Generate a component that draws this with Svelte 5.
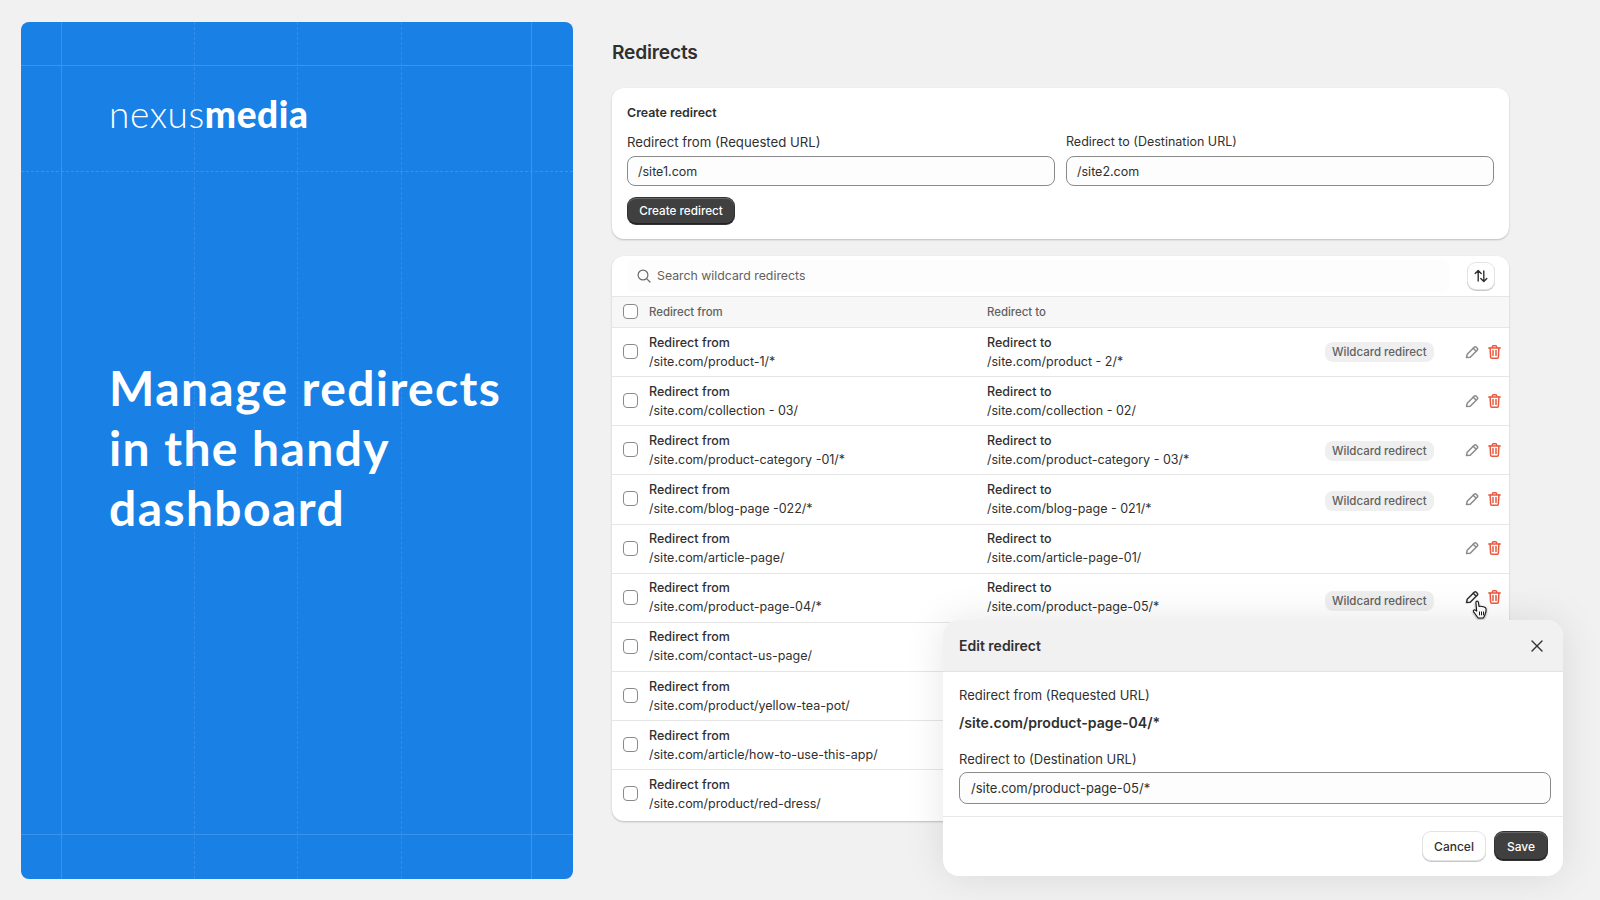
<script>
  const vLines = [
    { x: 40, dashed: false },
    { x: 173, dashed: true },
    { x: 276, dashed: true },
    { x: 380, dashed: true },
    { x: 510, dashed: false }
  ];

  // nudge: the badges in the design are not all centred the same in their row
  const rows = [
    { from: '/site.com/product-1/*', to: '/site.com/product - 2/*', wildcard: true, nudge: 0 },
    { from: '/site.com/collection - 03/', to: '/site.com/collection - 02/', wildcard: false },
    { from: '/site.com/product-category -01/*', to: '/site.com/product-category - 03/*', wildcard: true, nudge: 1 },
    { from: '/site.com/blog-page -022/*', to: '/site.com/blog-page - 021/*', wildcard: true, nudge: 2 },
    { from: '/site.com/article-page/', to: '/site.com/article-page-01/', wildcard: false },
    { from: '/site.com/product-page-04/*', to: '/site.com/product-page-05/*', wildcard: true, active: true, nudge: 3 },
    { from: '/site.com/contact-us-page/' },
    { from: '/site.com/product/yellow-tea-pot/' },
    { from: '/site.com/article/how-to-use-this-app/' },
    { from: '/site.com/product/red-dress/' }
  ];
</script>

<div class="page">
  <aside class="hero">
    <span class="h-line top"></span>
    <span class="h-line dotted"></span>
    <span class="h-line bottom"></span>
    {#each vLines as line}
      <span class="v-line" class:dashed={line.dashed} style="left: {line.x}px"></span>
    {/each}

    <div class="logo"><span class="logo-light">nexus</span><span class="logo-bold">media</span></div>
    <h2>Manage redirects<br />in the handy<br />dashboard</h2>
  </aside>

  <main class="content">
    <h1>Redirects</h1>

    <section class="card create">
      <h3>Create redirect</h3>
      <div class="fields">
        <div class="field">
          <span class="label">Redirect from (Requested URL)</span>
          <div class="input">/site1.com</div>
        </div>
        <div class="field">
          <span class="label small">Redirect to (Destination URL)</span>
          <div class="input">/site2.com</div>
        </div>
      </div>
      <button class="btn-dark create-btn">Create redirect</button>
    </section>

    <section class="card table">
      <div class="search-row">
        <div class="search">
          <svg width="14" height="14" viewBox="0 0 14 14" fill="none" stroke="#6b6b6b" stroke-width="1.2" stroke-linecap="round">
            <circle cx="6" cy="6" r="4.9" />
            <path d="M9.6 9.6 13 13" />
          </svg>
          <span>Search wildcard redirects</span>
        </div>
        <button class="sort" aria-label="Sort">
          <svg width="14" height="14" viewBox="0 0 14 14" fill="none" stroke="#303030" stroke-width="1.4" stroke-linecap="round" stroke-linejoin="round">
            <path d="M4.2 12V1.6M1.2 4.6l3-3 3 3" />
            <path d="M9.8 2v10.4M6.8 9.4l3 3 3-3" />
          </svg>
        </button>
      </div>

      <div class="row head">
        <span class="check"></span>
        <span class="col-from">Redirect from</span>
        <span class="col-to">Redirect to</span>
      </div>

      {#each rows as row}
        <div class="row">
          <span class="check"></span>
          <div class="col-from">
            <strong>Redirect from</strong>
            <span>{row.from}</span>
          </div>
          {#if row.to}
            <div class="col-to">
              <strong>Redirect to</strong>
              <span>{row.to}</span>
            </div>
            <div class="col-badge">
              {#if row.wildcard}<span class="badge" style="transform: translateY({row.nudge}px)">Wildcard redirect</span>{/if}
            </div>
            <div class="actions">
              <svg class="pencil" class:active={row.active} width="14" height="14" viewBox="0 0 14 14" fill="none" stroke-width="1.5" stroke-linejoin="round" stroke-linecap="round">
                <path d="M1.5 12.5l.7-3.2 7-7a1.5 1.5 0 0 1 2.1 0l.9.9a1.5 1.5 0 0 1 0 2.1l-7 7-3.7.2z" />
                <path d="M8.2 3.3l2.5 2.5" />
              </svg>
              <svg width="13" height="14" viewBox="0 0 13 14" fill="none" stroke="#e8593f" stroke-width="1.5" stroke-linejoin="round" stroke-linecap="round">
                <path d="M.8 3h11.4M4.4 3V1.6c0-.4.3-.8.8-.8h2.600c.5 0 .8.4.8.8V3" />
                <path d="M2.100 3l.5 9c0 .7.5 1.200 1.200 1.200h5.400c.7 0 1.200-.5 1.200-1.200l.5-9" />
                <path d="M5 5.600v5M8 5.600v5" />
              </svg>
            </div>
          {/if}
        </div>
      {/each}
    </section>
  </main>

  <svg class="cursor" width="16" height="19" viewBox="0 0 16 19">
    <path d="M4.200 1.600c.8-.9 2-.5 2.200.7l.6 4.200c.9-.5 5.300.2 6.400 1.200.8.8.6 4.200-.3 6.600-.5 1.500-1.300 2.900-2 3.700H6.200C5 16.400 3.400 14 1.700 11.800c-.8-1.100.3-2.300 1.500-1.700l1.500 1L4 3.400c-.1-.7-.1-1.300.2-1.800z" fill="#fff" stroke="#1a1a1a" stroke-width="1.100" stroke-linejoin="round" />
    <path d="M7.500 11.500v3.800M9.500 11.500v3.800M11.500 11.500v3.800" stroke="#1a1a1a" stroke-width="1" />
  </svg>

  <div class="modal">
    <header>
      <span class="modal-title">Edit redirect</span>
      <svg width="12" height="12" viewBox="0 0 12 12" fill="none" stroke="#303030" stroke-width="1.400" stroke-linecap="round">
        <path d="M1 1l10 10M11 1 1 11" />
      </svg>
    </header>
    <div class="modal-body">
      <span class="label">Redirect from (Requested URL)</span>
      <strong class="value">/site.com/product-page-04/*</strong>
      <span class="label second">Redirect to (Destination URL)</span>
      <div class="input tall">/site.com/product-page-05/*</div>
    </div>
    <footer>
      <button class="btn-light">Cancel</button>
      <button class="btn-dark save">Save</button>
    </footer>
  </div>
</div>

<style>
  :global(body) {
    margin: 0;
    background: #f1f1f1;
  }

  .page {
    position: relative;
    width: 1600px;
    height: 900px;
    display: flex;
    align-items: flex-start;
    box-sizing: border-box;
    padding: 22px 0 0 21px;
    font-family: Inter, "Liberation Sans", sans-serif;
    font-size: 12.5px;
    color: #303030;
    overflow: hidden;
  }

  .hero {
    position: relative;
    width: 552px;
    height: 857px;
    flex-shrink: 0;
    box-sizing: border-box;
    padding: 70px 0 0 88px;
    background: #1980e6;
    border-radius: 8px;
    color: #fff;
    overflow: hidden;
  }

  .h-line {
    position: absolute;
    left: 0;
    right: 0;
    height: 1px;
    background: #3a93ec;
  }

  .h-line.top { top: 43px; }
  .h-line.bottom { top: 812px; }

  .h-line.dotted {
    top: 149px;
    height: 0;
    background: none;
    border-top: 1px dashed #3a93ec;
  }

  .v-line {
    position: absolute;
    top: 0;
    bottom: 0;
    width: 1px;
    background: #3a93ec;
  }

  .v-line.dashed {
    width: 0;
    background: none;
    border-left: 1px dashed #338eeb;
  }

  .logo {
    position: relative;
    font-family: Lato, sans-serif;
    font-size: 37px;
    line-height: 44px;
    letter-spacing: 0.6px;
  }

  .logo-light { font-weight: 300; }
  .logo-bold { font-weight: 900; }

  h2 {
    position: relative;
    margin: 222px 0 0;
    font-family: Lato, sans-serif;
    font-size: 48px;
    font-weight: 700;
    line-height: 60px;
    letter-spacing: 1.4px;
  }

  .content {
    width: 897px;
    margin-left: 39px;
  }

  h1 {
    margin: 18px 0 24px;
    font-size: 19.2px;
    line-height: 24px;
    font-weight: 600;
    letter-spacing: -0.2px;
  }

  .card {
    background: #fff;
    border-radius: 12px;
    box-shadow: 0 1px 2px rgba(0, 0, 0, 0.22);
  }

  .create {
    height: 151px;
    box-sizing: border-box;
    padding: 17px 15px 0;
    margin-bottom: 17px;
  }

  h3 {
    margin: 0 0 13px;
    font-size: 12.4px;
    line-height: 16px;
    font-weight: 600;
  }

  .fields {
    display: flex;
    gap: 11px;
  }

  .field {
    flex: 1;
  }

  .label {
    display: block;
    font-size: 13.2px;
    line-height: 16px;
    margin-bottom: 6px;
  }

  .label.small {
    font-size: 12.5px;
  }

  .input {
    height: 30px;
    box-sizing: border-box;
    padding: 0 10px;
    display: flex;
    align-items: center;
    background: #fdfdfd;
    border: 1px solid #8a8a8a;
    border-radius: 8px;
  }

  button {
    font: inherit;
    cursor: pointer;
    padding: 0;
  }

  .btn-dark {
    height: 28px;
    color: #fff;
    font-weight: 500;
    font-size: 12px;
    background: #404040;
    border: none;
    border-radius: 8px;
    box-shadow: inset 0 1px 0 #666, inset 0 -1px 0 #222, 0 0 0 1px #333;
  }

  .create-btn {
    width: 106px;
    height: 26px;
    margin: 12px 0 0 1px;
    font-size: 11.7px;
  }

  .table {
    height: 565px;
    overflow: hidden;
  }

  .search-row {
    height: 40px;
    display: flex;
    align-items: center;
    justify-content: space-between;
    padding: 0 15px;
  }

  .search {
    width: 822px;
    height: 32px;
    margin-top: -1px;
    box-sizing: border-box;
    padding-left: 10px;
    display: flex;
    align-items: center;
    gap: 6px;
    font-size: 12.3px;
    color: #616161;
    background: #fdfdfd;
    border-radius: 8px;
  }

  .sort {
    width: 26px;
    height: 26px;
    display: flex;
    align-items: center;
    justify-content: center;
    background: #fff;
    border: none;
    border-radius: 8px;
    box-shadow: 0 0 0 1px #e3e3e3, 0 1px 0 1px #c8c8c8;
  }

  .row {
    height: 49.15px;
    box-sizing: border-box;
    display: flex;
    align-items: center;
    border-top: 1px solid #e6e6e6;
  }

  .row.head {
    height: 31px;
    color: #616161;
    font-size: 11.4px;
    font-weight: 500;
    background: #f7f7f7;
  }

  .check {
    width: 13px;
    height: 13px;
    margin: -1px 11px 0 11px;
    flex-shrink: 0;
    background: #fff;
    border: 1px solid #8a8a8a;
    border-radius: 4px;
  }

  .col-from {
    width: 338px;
    flex-shrink: 0;
    display: flex;
    flex-direction: column;
    gap: 3px;
    line-height: 16px;
  }

  .col-to {
    width: 338px;
    flex-shrink: 0;
    display: flex;
    flex-direction: column;
    gap: 3px;
    line-height: 16px;
  }

  .col-from strong,
  .col-to strong {
    font-weight: 500;
  }

  .col-badge {
    width: 140px;
    flex-shrink: 0;
  }

  .badge {
    display: inline-block;
    height: 20px;
    padding: 0 7px;
    line-height: 20px;
    font-size: 11.5px;
    font-weight: 500;
    color: #616161;
    background: #efefef;
    border-radius: 8px;
  }

  .actions {
    display: flex;
    align-items: center;
    gap: 9px;
    margin-top: -1px;
  }

  .pencil {
    stroke: #8a8a8a;
  }

  .pencil.active {
    stroke: #303030;
  }

  .cursor {
    position: absolute;
    left: 1472px;
    top: 600px;
    filter: drop-shadow(0 1px 1px rgba(0, 0, 0, 0.4));
  }

  .modal {
    position: absolute;
    left: 943px;
    top: 620px;
    width: 620px;
    height: 256px;
    display: flex;
    flex-direction: column;
    font-size: 13px;
    background: #fff;
    border-radius: 16px;
    overflow: hidden;
    box-shadow: 0 0 40px rgba(0, 0, 0, 0.1);
  }

  .modal header {
    height: 52px;
    flex-shrink: 0;
    box-sizing: border-box;
    padding: 0 20px 0 16px;
    display: flex;
    align-items: center;
    justify-content: space-between;
    background: #f1f1f1;
    border-bottom: 1px solid #e3e3e3;
  }

  .modal-title {
    font-size: 14px;
    font-weight: 600;
  }

  .modal-body {
    height: 145px;
    box-sizing: border-box;
    padding: 15px 12px 0 16px;
    border-bottom: 1px solid #e8e8e8;
  }

  .modal-body .label {
    font-size: 13px;
    margin-bottom: 0;
  }

  .value {
    display: block;
    margin-top: 12px;
    font-size: 14.1px;
    line-height: 16px;
    font-weight: 600;
  }

  .modal-body .label.second {
    margin: 20px 0 5px;
  }

  .input.tall {
    height: 32px;
    padding: 0 11px;
  }

  footer {
    flex: 1;
    display: flex;
    align-items: center;
    justify-content: flex-end;
    gap: 10px;
    padding: 0 16px 1px 0;
  }

  .btn-light {
    width: 62px;
    height: 28px;
    font-size: 12px;
    font-weight: 500;
    color: #303030;
    background: #fff;
    border: none;
    border-radius: 8px;
    box-shadow: 0 0 0 1px #e3e3e3, 0 1px 0 1px #c8c8c8;
  }

  .save {
    width: 52px;
  }
</style>
